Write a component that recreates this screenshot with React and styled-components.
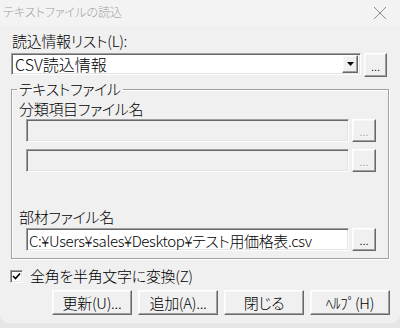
import styled, { createGlobalStyle } from "styled-components";

const GlobalStyle = createGlobalStyle`
  html, body {
    margin: 0;
    padding: 0;
    background: #e6e6e6;
  }
  body {
    font-family: "Noto Sans CJK JP", sans-serif;
    font-feature-settings: "palt";
    font-weight: 300;
  }
`;

const raised = `
  background: #f0f0f0;
  border-top: 1px solid #ffffff;
  border-left: 1px solid #ffffff;
  border-right: 1px solid #696969;
  border-bottom: 1px solid #696969;
  box-shadow: inset -1px -1px 0 #a0a0a0, inset 1px 1px 0 #f8f8f8;
`;

const sunken = `
  border-top: 1px solid #a0a0a0;
  border-left: 1px solid #a0a0a0;
  border-right: 1px solid #ffffff;
  border-bottom: 1px solid #ffffff;
  box-shadow: inset 1px 1px 0 #696969, inset -1px -1px 0 #e3e3e3;
`;

const Window = styled.div`
  width: 400px;
  height: 323px;
  background: #f0f0f0;
  border-radius: 0 0 8px 8px;
  display: flex;
  flex-direction: column;
  box-sizing: border-box;
  overflow: hidden;
`;

const TitleBar = styled.div`
  height: 26px;
  flex: none;
  background: #f3f3f3;
  display: flex;
  align-items: center;
  justify-content: space-between;
  padding: 0 13px 0 3px;
  box-sizing: border-box;
`;

const Title = styled.span`
  font-size: 12px;
  color: #a0a0a0;
  line-height: 16px;
  padding-bottom: 2px;
`;

const Body = styled.div`
  display: flex;
  flex-direction: column;
  padding: 5px 11px 0 11px;
`;

const Label = styled.div`
  font-size: 15px;
  line-height: 18px;
  color: #000;
  padding-left: ${(p) => p.$indent || 1}px;
  margin-top: ${(p) => p.$top || 0}px;
  letter-spacing: -0.3px;
  height: ${(p) => p.$h || 22}px;
`;

const Row = styled.div`
  display: flex;
  align-items: flex-start;
  gap: 3px;
  margin-left: ${(p) => p.$indent || 0}px;
  margin-top: ${(p) => p.$top || 0}px;
`;

const Combo = styled.div`
  ${sunken}
  width: 350px;
  height: 22px;
  box-sizing: border-box;
  background: #fff;
  display: flex;
  align-items: center;
  padding: 2px;
`;

const ComboText = styled.span`
  flex: 1;
  font-size: 16px;
  line-height: 18px;
  padding-left: 1px;
  color: #000;
`;

const DropButton = styled.div`
  ${raised}
  width: 16px;
  height: 18px;
  box-sizing: border-box;
  display: flex;
  align-items: center;
  justify-content: center;
`;

const DotsButton = styled.div`
  ${raised}
  width: ${(p) => p.$w || 24}px;
  height: ${(p) => p.$h || 23}px;
  box-sizing: border-box;
  display: flex;
  align-items: center;
  justify-content: center;
  font-family: "Liberation Sans", sans-serif;
  font-size: 11px;
  padding-top: 3px;
  color: ${(p) => (p.$disabled ? "#a0a0a0" : "#000")};
  text-shadow: ${(p) => (p.$disabled ? "1px 1px 0 #fff" : "none")};
`;

const Group = styled.fieldset`
  margin: 4px 0 0 0;
  padding: 0 0 7px 0;
  border: 1px solid #a0a0a0;
  box-shadow: inset 1px 1px 0 #fff, 1px 1px 0 #fff;
  width: 378px;
  box-sizing: border-box;
`;

const Legend = styled.legend`
  font-size: 15px;
  line-height: 16px;
  height: 16px;
  padding: 0 2px;
  margin-left: 5px;
  letter-spacing: -0.3px;
`;

const Field = styled.div`
  ${sunken}
  width: 323px;
  height: 23px;
  box-sizing: border-box;
  background: ${(p) => (p.$disabled ? "#f0f0f0" : "#fff")};
  padding: 2px 2px 0 2px;
  font-size: 15px;
  line-height: 19px;
  white-space: nowrap;
  overflow: hidden;
  letter-spacing: -0.4px;
`;

const CheckRow = styled.label`
  display: flex;
  align-items: center;
  gap: 7px;
  margin: 7px 0 0 -1px;
  font-size: 15px;
  line-height: 20px;
  letter-spacing: -0.3px;
`;

const CheckBox = styled.span`
  ${sunken}
  width: 13px;
  height: 13px;
  box-sizing: border-box;
  background: #fff;
  display: flex;
  align-items: center;
  justify-content: center;
`;

const ButtonRow = styled.div`
  display: flex;
  justify-content: flex-end;
  gap: 6px;
  margin: 4px -1px 0 0;
`;

const Button = styled.div`
  ${raised}
  width: 80px;
  height: 25px;
  box-sizing: border-box;
  display: flex;
  align-items: center;
  justify-content: center;
  font-size: 15px;
  line-height: 18px;
  letter-spacing: -0.3px;
`;

function CloseIcon() {
  return (
    <svg width="14" height="14" viewBox="0 0 14 14">
      <path d="M1 1 L13 13 M13 1 L1 13" stroke="#8a8a8a" strokeWidth="1" fill="none" />
    </svg>
  );
}

function ArrowIcon() {
  return (
    <svg width="7" height="4" viewBox="0 0 7 4">
      <polygon points="0,0 7,0 3.5,4" fill="#000" />
    </svg>
  );
}

function CheckIcon() {
  return (
    <svg width="9" height="9" viewBox="0 0 9 9">
      <path d="M1 4 L3.5 6.5 L8 1.5" stroke="#000" strokeWidth="1.7" fill="none" />
    </svg>
  );
}

export default function App() {
  return (
    <>
      <GlobalStyle />
      <Window>
        <TitleBar>
          <Title>テキストファイルの読込</Title>
          <CloseIcon />
        </TitleBar>
        <Body>
          <Label $top={1} $h={21}>読込情報リスト(L):</Label>
          <Row>
            <Combo>
              <ComboText>CSV読込情報</ComboText>
              <DropButton>
                <ArrowIcon />
              </DropButton>
            </Combo>
            <DotsButton $w={23} $h={24}>...</DotsButton>
          </Row>

          <Group>
            <Legend>テキストファイル</Legend>
            <Label $indent={7} $top={3} $h={19}>分類項目ファイル名</Label>
            <Row $indent={14}>
              <Field $disabled />
              <DotsButton $disabled>...</DotsButton>
            </Row>
            <Row $indent={14} $top={7}>
              <Field $disabled />
              <DotsButton $disabled>...</DotsButton>
            </Row>
            <div style={{ height: 36 }} />
            <Label $indent={7} $h={20}>部材ファイル名</Label>
            <Row $indent={14}>
              <Field>C:¥Users¥sales¥Desktop¥テスト用価格表.csv</Field>
              <DotsButton>...</DotsButton>
            </Row>
          </Group>

          <CheckRow>
            <CheckBox>
              <CheckIcon />
            </CheckBox>
            全角を半角文字に変換(Z)
          </CheckRow>

          <ButtonRow>
            <Button>更新(U)...</Button>
            <Button>追加(A)...</Button>
            <Button>閉じる</Button>
            <Button>ﾍﾙﾌﾟ(H)</Button>
          </ButtonRow>
        </Body>
      </Window>
    </>
  );
}
